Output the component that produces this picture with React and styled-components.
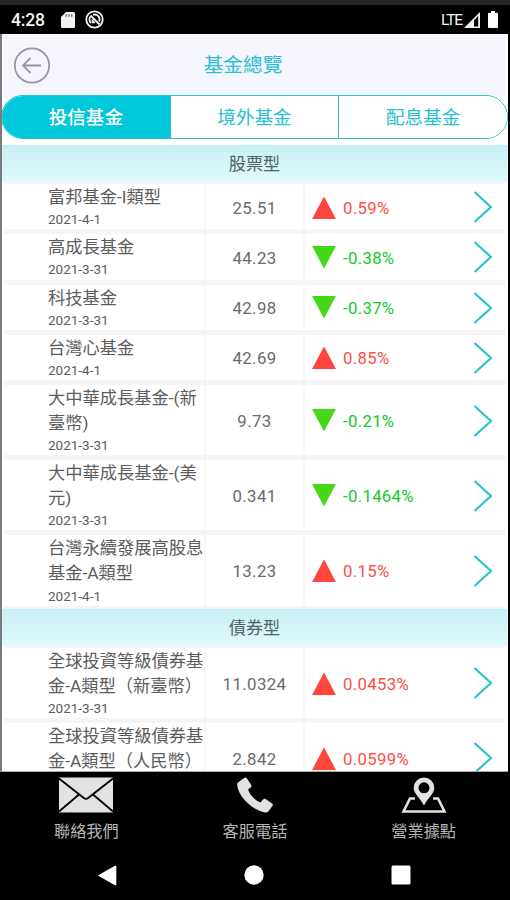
import React from 'react';
import styled, { createGlobalStyle } from 'styled-components';

const GlobalStyle = createGlobalStyle`
  * {
    box-sizing: border-box;
  }
  body {
    margin: 0;
    background: #000;
    font-family: Roboto, 'Noto Sans CJK TC', sans-serif;
  }
`

const Phone = styled.div`
  display: flex;
  flex-direction: column;
  width: 510px;
  height: 900px;
  overflow: hidden;
  background: #000;
  border-top: 5px solid #262425;
`

const StatusBar = styled.div`
  flex: none;
  display: flex;
  align-items: center;
  height: 29px;
  padding: 0 12px 0 11px;
  color: #f2f2f2;
`

const Clock = styled.span`
  width: 50px;
  font-size: 17.5px;
  font-weight: 500;
  letter-spacing: -0.2px;
`

const Network = styled.span`
  margin-left: auto;
  margin-right: 2px;
  font-size: 15.5px;
  letter-spacing: -1.1px;
`

const StatusIcon = styled.svg`
  display: block;
  margin-right: ${props => props.$gap || 0}px;
`

const Page = styled.div`
  flex: none;
  display: flex;
  flex-direction: column;
  width: 508px;
  height: 738px;
  overflow: hidden;
  background: #fff;
  border-left: 2px solid #7b7b7d;
  border-bottom: 1px solid #aaa;
`

const Header = styled.div`
  flex: none;
  display: grid;
  grid-template-columns: 60px 1fr 60px;
  align-items: center;
  height: 61px;
  margin: 1px 3px 0 1px;
  padding-left: 10px;
  background: #f5f5fd;
`

const BackButton = styled.button`
  width: 38px;
  height: 38px;
  padding: 0;
  border: 0;
  background: none;
`

const Title = styled.div`
  padding: 1px 32px 0 0;
  text-align: center;
  font-size: 19.7px;
  line-height: 28px;
  color: #2bbfcf;
`

const Tabs = styled.div`
  flex: none;
  display: flex;
  height: 44px;
  margin: -1px 0 6px -1px;
  overflow: hidden;
  border: 1.5px solid #2cc0d0;
  border-radius: 22px;
  background: #fff;
`

const Tab = styled.div`
  flex: 1;
  display: flex;
  align-items: center;
  justify-content: center;
  padding-bottom: 3px;
  font-size: 18.6px;
  font-weight: ${props => props.$active ? 500 : 400};
  color: ${props => props.$active ? '#fff' : '#2bbfcf'};
  background: ${props => props.$active ? '#00c8da' : '#fff'};

  & + & {
    border-left: 1.5px solid #2cc0d0;
  }
`

const SectionTitle = styled.div`
  flex: none;
  height: 37.2px;
  padding-right: 1px;
  text-align: center;
  font-size: 17.1px;
  line-height: 38px;
  color: #566164;
  background: linear-gradient(#c6f1f5, #e0fafb);
`

const Row = styled.div`
  flex: none;
  display: grid;
  grid-template-columns: 200px 101px 1fr;
  height: ${props => props.$tall ? 75.2 : 50.2}px;
  margin: 0 3px 0 2px;
  border-top: 2px solid #f5f5f5;
  border-bottom: 3px solid #f5f5f5;
`

const NameCell = styled.div`
  padding: 1px 0 0 44px;
  white-space: nowrap;
  color: #5c5c5c;
`

const FundName = styled.div`
  font-size: 17.25px;
  line-height: 25.1px;
`

const FundDate = styled.div`
  font-size: 13.5px;
  line-height: 19px;
`

const Price = styled.div`
  display: flex;
  align-items: center;
  justify-content: center;
  padding-top: 2px;
  border: solid #f7f7f7;
  border-width: 0 2px;
  font-size: 16.8px;
  letter-spacing: 0.4px;
  color: #6a6a6a;
`

const ChangeCell = styled.div`
  display: flex;
  align-items: center;
  padding: 2px 12px 0 7px;
  font-size: 16.8px;
  letter-spacing: 0.3px;
  color: ${props => props.$up ? '#fa5147' : '#12c92b'};

  svg:last-child {
    margin-left: auto;
  }
`

const Arrow = styled.svg`
  flex: none;
  margin: 0 7px 1px 0;
`

const BottomBar = styled.div`
  flex: none;
  display: grid;
  grid-template-columns: repeat(3, 1fr);
  height: 76px;
  padding: 5px 2px 0;
`

const BottomItem = styled.div`
  display: flex;
  flex-direction: column;
  align-items: center;
  font-size: 16.2px;
  line-height: 24px;
  color: #b5b5b5;

  svg {
    display: block;
    margin-bottom: 7px;
  }
`

const AndroidNav = styled.div`
  display: flex;
  align-items: center;
  justify-content: space-between;
  height: 52px;
  padding: 2px 99px 0 97px;
`

const sections = [
  {
    title: '股票型',
    funds: [
      { name: ['富邦基金-I類型'], date: '2021-4-1', price: '25.51', change: '0.59%' },
      { name: ['高成長基金'], date: '2021-3-31', price: '44.23', change: '-0.38%' },
      { name: ['科技基金'], date: '2021-3-31', price: '42.98', change: '-0.37%' },
      { name: ['台灣心基金'], date: '2021-4-1', price: '42.69', change: '0.85%' },
      { name: ['大中華成長基金-(新', '臺幣)'], date: '2021-3-31', price: '9.73', change: '-0.21%' },
      { name: ['大中華成長基金-(美', '元)'], date: '2021-3-31', price: '0.341', change: '-0.1464%' },
      { name: ['台灣永續發展高股息', '基金-A類型'], date: '2021-4-1', price: '13.23', change: '0.15%' },
    ]
  },
  {
    title: '債券型',
    funds: [
      { name: ['全球投資等級債券基', '金-A類型（新臺幣）'], date: '2021-3-31', price: '11.0324', change: '0.0453%' },
      { name: ['全球投資等級債券基', '金-A類型（人民幣）'], price: '2.842', change: '0.0599%' },
    ]
  }
]

function FundRow({ fund }) {
  const up = !fund.change.startsWith('-')

  return (
    <Row $tall={fund.name.length > 1}>
      <NameCell>
        {fund.name.map(line => <FundName key={line}>{line}</FundName>)}
        {fund.date ? <FundDate>{fund.date}</FundDate> : null}
      </NameCell>
      <Price>{fund.price}</Price>
      <ChangeCell $up={up}>
        <Arrow width="24" height="23" viewBox="0 0 24 23">
          {up ?
            <path d="M12 0.5 24 23H0Z" fill="#ff463c"/> :
            <path d="M0 0H24L12 22.5Z" fill="#45d816"/>
          }
        </Arrow>
        {fund.change}
        <svg width="20" height="33" viewBox="0 0 20 33" fill="none" stroke="#22c3d4" strokeWidth="2.1">
          <path d="M1.5 1 18 16 1.5 31"/>
        </svg>
      </ChangeCell>
    </Row>
  )
}

function App() {
  return (
    <Phone>
      <GlobalStyle/>
      <StatusBar>
        <Clock>4:28</Clock>
        {/* sd card */}
        <StatusIcon $gap={10} width="14" height="16" viewBox="0 0 14 16">
          <path d="M5 0H12.5Q14 0 14 1.5V14.5Q14 16 12.5 16H1.5Q0 16 0 14.5V5Z" fill="#f2f2f2"/>
          <path d="M5.2 2.2V4.7M8 2.2V4.7M10.8 2.2V4.7" stroke="#555" strokeWidth="1.2"/>
        </StatusIcon>
        <StatusIcon width="19" height="19" viewBox="0 0 19 19" fill="none" stroke="#f2f2f2">
          <circle cx="9.5" cy="9.5" r="8.2" strokeWidth="1.8"/>
          <path d="M6 13A4.9 4.9 0 0 1 5.8 6M8 4.8A4.9 4.9 0 0 1 14 11.6" strokeWidth="1.8"/>
          <path d="M5.5 5.5 14.5 14.5M7.6 9.5V12.4H10" strokeWidth="1.9"/>
        </StatusIcon>
        <Network>LTE</Network>
        <StatusIcon $gap={8} width="16" height="16" viewBox="0 0 16 16">
          <path d="M0 16 16 0V16Z" fill="#f2f2f2"/>
          <path d="M10 8.2 14.2 4V14.5H10Z" fill="#000"/>
        </StatusIcon>
        <StatusIcon width="10" height="17" viewBox="0 0 10 17">
          <path d="M3 0H7V1.7H9Q10 1.7 10 2.7V16Q10 17 9 17H1Q0 17 0 16V2.7Q0 1.7 1 1.7H3Z" fill="#fff"/>
        </StatusIcon>
      </StatusBar>

      <Page>
        <Header>
          <BackButton>
            <svg width="38" height="38" viewBox="0 0 38 38" fill="none" stroke="#98989c" strokeWidth="1.8">
              <circle cx="19" cy="18.5" r="17.2"/>
              <path d="M28 18.5H10.5M17.5 11 10 18.5 17.5 26"/>
            </svg>
          </BackButton>
          <Title>基金總覽</Title>
        </Header>
        <Tabs>
          <Tab $active>投信基金</Tab>
          <Tab>境外基金</Tab>
          <Tab>配息基金</Tab>
        </Tabs>
        {sections.map(section => (
          <React.Fragment key={section.title}>
            <SectionTitle>{section.title}</SectionTitle>
            {section.funds.map(fund => <FundRow key={fund.name.join('')} fund={fund}/>)}
          </React.Fragment>
        ))}
      </Page>

      <BottomBar>
        <BottomItem>
          <svg width="54" height="36" viewBox="0 0 54 36">
            <path d="M0 0.5H54V35.5H0Z" fill="#e2e2e2"/>
            <path d="M0 1.5 24.5 20.8Q27 23 29.5 20.8L54 1.5M0 34.5 20 17.5M54 34.5 34 17.5" fill="none" stroke="#000" strokeWidth="1.8"/>
          </svg>
          聯絡我們
        </BottomItem>
        <BottomItem>
          <svg width="36" height="36" viewBox="0 0 36 36">
            <path d="M1 5.5 7.5 0.8Q9 0 10 1.4L14.2 8Q15 9.5 13.6 10.6L11 12.6Q12.5 17 16 20.5T23.6 25.5L26 22.6Q27 21.2 28.6 22L35 26.6Q36.4 27.6 35.4 29L31.5 34.3Q30 36 27.5 35.4Q17 32.8 9 24.6T0.2 8Q0 6.4 1 5.5Z" fill="#e2e2e2"/>
          </svg>
          客服電話
        </BottomItem>
        <BottomItem>
          <svg width="46" height="36" viewBox="0 0 46 36">
            <path d="M14 21.5H9L2.5 34.5H43.5L37 21.5H32" fill="none" stroke="#e2e2e2" strokeWidth="2.6"/>
            <path fillRule="evenodd" d="M23 0.5A10.3 10.3 0 0 1 33.3 10.8C33.3 17 27 20.5 23 28.5C19 20.5 12.7 17 12.7 10.8A10.3 10.3 0 0 1 23 0.5ZM23 5.3A5.5 5.5 0 1 0 23 16.3A5.5 5.5 0 1 0 23 5.3Z" fill="#e2e2e2"/>
          </svg>
          營業據點
        </BottomItem>
      </BottomBar>
      <AndroidNav>
        <svg width="20" height="21" viewBox="0 0 20 21">
          <path d="M0.8 10.5 18 0.8Q19.3 0.3 19.3 1.5V19.5Q19.3 20.7 18 20.2Z" fill="#fff"/>
        </svg>
        <svg width="20" height="20" viewBox="0 0 20 20">
          <circle cx="10" cy="10" r="9.7" fill="#fff"/>
        </svg>
        <svg width="20" height="20" viewBox="0 0 20 20">
          <rect x="0.5" y="0.5" width="19" height="19" rx="1.5" fill="#fff"/>
        </svg>
      </AndroidNav>
    </Phone>
  );
}

export default App;
